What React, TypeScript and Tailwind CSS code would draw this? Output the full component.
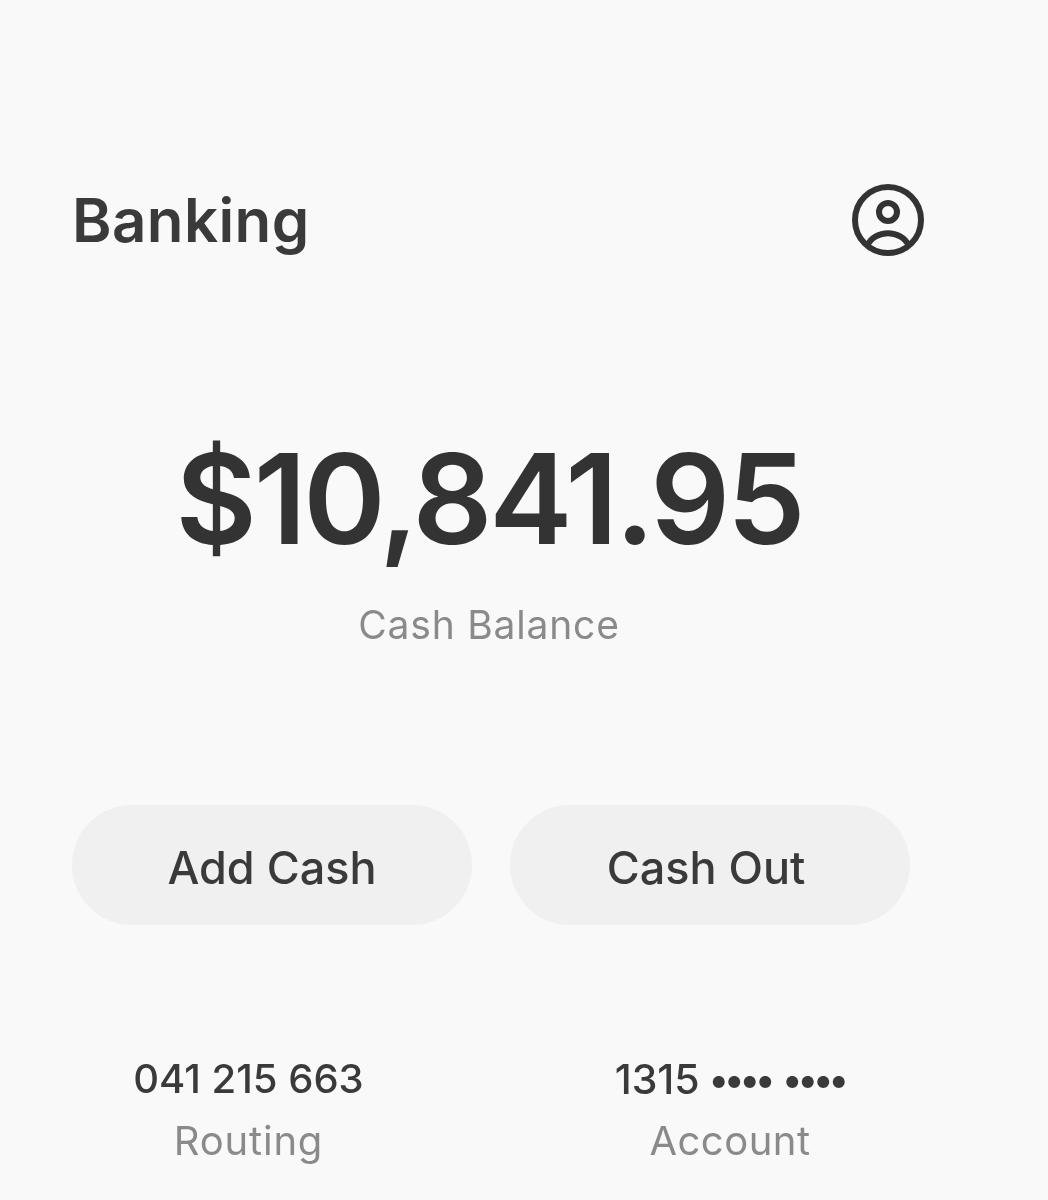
export default function App() {
  return (
    <div className="w-[1048px] h-[1200px] overflow-hidden bg-[#f9f9f9] text-[#3a3a3a] font-['Inter','Liberation_Sans',sans-serif] blur-[0.7px]">
      <div className="flex items-center justify-between pt-[183px] pl-[72px] pr-[123px] h-[257px]">
        <h1 className="text-[60px] leading-[74px] font-semibold tracking-[0.4px]">Banking</h1>
        <svg width="74" height="74" viewBox="0 0 74 74" fill="none" stroke="#333" strokeWidth="6">
          <circle cx="37" cy="37" r="33" />
          <circle cx="37" cy="29" r="9" />
          <path d="M16 63 C24 46 50 46 58 63" />
        </svg>
      </div>

      <div className="flex flex-col items-center pr-[70px] mt-[177px]">
        <div className="text-[125px] leading-[130px] font-semibold tracking-[-3.2px] text-[#333]">$10,841.95</div>
        <div className="mt-[36px] text-[39px] leading-[50px] tracking-[0.8px] text-[#8a8a8a]">Cash Balance</div>
      </div>

      <div className="flex gap-[38px] pl-[72px] mt-[155px]">
        <button className="w-[400px] h-[120px] rounded-[60px] bg-[#f1f0f1] text-[45px] font-medium pt-[6px]">Add Cash</button>
        <button className="w-[400px] h-[120px] rounded-[60px] bg-[#f1f0f1] text-[45px] font-medium pt-[6px] pr-[8px]">Cash Out</button>
      </div>

      <div className="flex mt-[129px]">
        <div className="w-[497px] flex flex-col items-center">
          <div className="text-[40px] leading-[50px] font-medium">041 215 663</div>
          <div className="mt-[12px] text-[40px] leading-[50px] tracking-[0.8px] text-[#8a8a8a]">Routing</div>
        </div>
        <div className="w-[466px] flex flex-col items-center">
          <div className="text-[41px] leading-[50px] font-medium flex items-center">
            1315
            <span className="ml-[10px] text-[38px] font-bold tracking-[-2.5px] [word-spacing:5px]">•••• ••••</span>
          </div>
          <div className="mt-[12px] text-[40px] leading-[50px] tracking-[0.5px] text-[#8a8a8a]">Account</div>
        </div>
      </div>
    </div>
  );
}
